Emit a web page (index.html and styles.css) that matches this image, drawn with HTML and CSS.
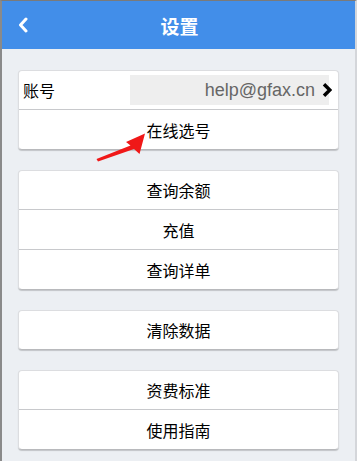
FILE: index.html
```html
<!DOCTYPE html>
<html lang="zh-CN">
<head>
<meta charset="utf-8">
<title>设置</title>
<link rel="stylesheet" href="styles.css">
</head>
<body>
<div class="frame">
  <header class="topbar">
    <svg class="back" width="12" height="16" viewBox="0 0 12 16"><polyline points="9,2 3.5,8 9,14" fill="none" stroke="#fff" stroke-width="3" stroke-linecap="round" stroke-linejoin="round"/></svg>
    <h1 class="title">设置</h1>
  </header>
  <main class="content">
    <section class="card">
      <div class="row account">
        <span class="label">账号</span>
        <span class="value">help@gfax.cn</span>
        <svg class="chev" width="10" height="14" viewBox="0 0 10 14"><polyline points="2,1.2 7.8,7 2,12.8" fill="none" stroke="#000" stroke-width="3.4" stroke-linejoin="miter"/></svg>
      </div>
      <div class="row">在线选号</div>
    </section>
    <section class="card">
      <div class="row">查询余额</div>
      <div class="row">充值</div>
      <div class="row">查询详单</div>
    </section>
    <section class="card">
      <div class="row">清除数据</div>
    </section>
    <section class="card">
      <div class="row">资费标准</div>
      <div class="row">使用指南</div>
    </section>
  </main>
  <svg class="arrow" width="357" height="461" viewBox="0 0 357 461"><polygon points="145,133.5 139.5,154 134,149 98,161.5 96.5,159 130.5,145.5 126,142" fill="#f01818"/></svg>
</div>
</body>
</html>
```
FILE: styles.css
```css
html, body {
  margin: 0;
  padding: 0;
}
body {
  font-family: "Liberation Sans", "Noto Sans CJK SC", sans-serif;
  background: #eceff3;
}
.frame {
  position: relative;
  width: 357px;
  height: 461px;
  box-sizing: border-box;
  border-top: 1px solid #7a7a7a;
  border-left: 2px solid #8a8a8a;
  border-right: 2px solid #d4d6da;
  background: #eceff3;
  overflow: hidden;
}
.topbar {
  height: 48px;
  background: #428ee9;
  display: flex;
  align-items: center;
  justify-content: center;
  position: relative;
}
.back {
  position: absolute;
  left: 15px;
  top: 16px;
}
.title {
  margin: 0;
  color: #fff;
  font-size: 19px;
  font-weight: bold;
  margin-left: 2px;
}
.content {
  padding: 21px 16px 0;
  display: flex;
  flex-direction: column;
  gap: 20px;
}
.card {
  background: #fff;
  border: 1px solid #dcdde0;
  border-bottom-color: #b8b9bc;
  border-radius: 4px;
  box-shadow: 0 1px 1px rgba(0,0,0,0.18);
  display: flex;
  flex-direction: column;
}
.row {
  height: 39px;
  display: flex;
  align-items: center;
  justify-content: center;
  font-size: 16px;
  color: #000;
  border-top: 1px solid #c8c9cc;
}
.row:first-child {
  border-top: none;
  height: 38px;
}
.account {
  justify-content: flex-start;
  padding-right: 6px;
}
.label {
  flex: 1;
  padding-left: 4px;
}
.value {
  width: 199px;
  height: 30px;
  box-sizing: border-box;
  background: #eeeeee;
  color: #666;
  font-size: 18px;
  line-height: 30px;
  text-align: right;
  padding-right: 14px;
}
.chev {
  margin-left: -7px;
}
.arrow {
  position: absolute;
  left: -2px;
  top: -1px;
  pointer-events: none;
}
```
